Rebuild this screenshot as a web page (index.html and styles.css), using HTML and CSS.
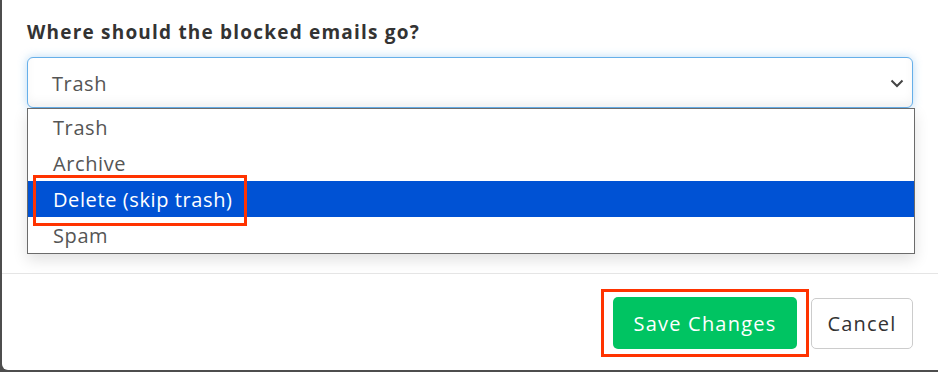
FILE: index.html
```html
<!DOCTYPE html>
<html lang="en">
<head>
    <meta charset="UTF-8">
    <meta name="viewport" content="width=device-width, initial-scale=1.0">
    <title>Blocked emails</title>
    <link rel="stylesheet" href="styles.css">
</head>
<body>
    <div class="modal">
        <div class="modal-body">
            <div class="form-group">
                <label class="label" for="dest">Where should the blocked emails go?</label>
                <div class="select-wrap">
                    <div class="select" id="dest">
                        <span>Trash</span>
                        <svg class="chevron" width="14" height="9" viewBox="0 0 14 9">
                            <path d="M1.5 1.5 L7 7 L12.5 1.5" fill="none" stroke="#444" stroke-width="2"/>
                        </svg>
                    </div>
                    <div class="menu">
                        <div class="option">Trash</div>
                        <div class="option">Archive</div>
                        <div class="option selected">Delete (skip trash)</div>
                        <div class="option">Spam</div>
                        <div class="mark mark-option"></div>
                    </div>
                </div>
            </div>
        </div>
        <div class="modal-footer">
            <div class="btn-mark">
                <button class="btn btn-save">Save Changes</button>
            </div>
            <button class="btn btn-cancel">Cancel</button>
        </div>
    </div>
</body>
</html>
```

FILE: styles.css
```css
body {
    margin: 0;
    background-color: #4d4d4d;
    font-family: "Open Sans", Lato, sans-serif;
    overflow: hidden;
}
.modal {
    margin-left: 2px;
    height: 370px;
    background-color: #fff;
    border-bottom-left-radius: 6px;
}
.modal-body {
    padding: 19px 25px 0 25px;
    height: 254px;
}
.label {
    display: block;
    font-size: 19px;
    font-weight: 700;
    letter-spacing: 1.2px;
    color: #333;
    line-height: 26px;
    margin-bottom: 12px;
}
.select-wrap {
    position: relative;
    width: 886px;
}
.select {
    height: 47px;
    padding: 2px 8px 0 24px;
    border: 1px solid #66afe9;
    border-radius: 6px;
    box-shadow: 0 0 10px rgba(102, 175, 233, 0.45), inset 0 -6px 8px rgba(0, 0, 0, 0.04);
    display: flex;
    align-items: center;
    justify-content: space-between;
    font-size: 20px;
    letter-spacing: 0.6px;
    color: #555;
    background-color: #fff;
}
.menu {
    position: absolute;
    top: 51px;
    left: 0;
    width: 886px;
    border: 1px solid #6b6b6b;
    background-color: #fff;
    box-shadow: 0 6px 14px rgba(0, 0, 0, 0.12);
}
.option {
    height: 35px;
    line-height: 35px;
    padding: 1px 0 0 25px;
    font-size: 20px;
    letter-spacing: 0.6px;
    color: #555;
}
.option.selected {
    background-color: #0052d4;
    color: #fff;
}
.mark {
    position: absolute;
    border: 3px solid #ff3300;
}
.mark-option {
    top: 66px;
    left: 5px;
    width: 208px;
    height: 45px;
}
.modal-footer {
    border-top: 1px solid #e5e5e5;
    padding: 15px 25px 0 0;
    display: flex;
    justify-content: flex-end;
    align-items: center;
    gap: 2px;
}
.btn-mark {
    border: 3px solid #ff3300;
    padding: 5px 9px;
}
.btn {
    font-family: inherit;
    font-size: 20px;
    letter-spacing: 1.2px;
    height: 52px;
    border-radius: 5px;
    cursor: pointer;
}
.btn-save {
    background-color: #00c462;
    color: #fff;
    border: none;
    width: 184px;
}
.btn-cancel {
    background-color: #fff;
    color: #333;
    border: 1px solid #ccc;
    width: 102px;
    height: 51px;
}
```
